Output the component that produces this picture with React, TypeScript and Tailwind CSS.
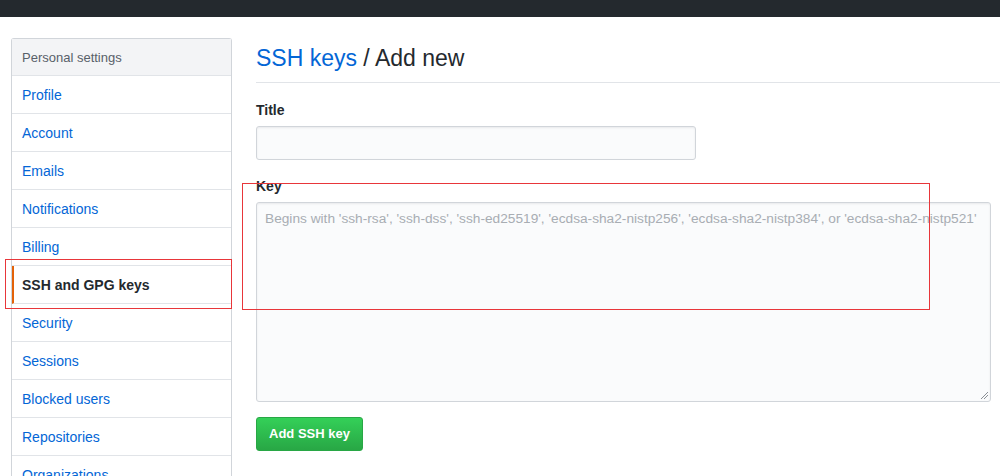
const items = [
  'Profile',
  'Account',
  'Emails',
  'Notifications',
  'Billing',
  'SSH and GPG keys',
  'Security',
  'Sessions',
  'Blocked users',
  'Repositories',
  'Organizations',
];

export default function App() {
  return (
    <div className="relative h-[476px] w-[1000px] overflow-hidden bg-white font-['Liberation_Sans',Arial,sans-serif] text-[14px] text-[#24292e]">
      <div className="h-[17px] bg-[#24292e]" />
      <div className="flex gap-[24px] pl-[11px] pt-[21px]">
        <nav className="w-[221px] shrink-0 rounded-t-[3px] border border-[#d1d5da] border-b-0">
          <div className="flex h-[37px] items-center border-b border-[#e1e4e8] bg-[#f3f4f6] px-[10px] pt-[2px] text-[13px] text-[#586069]">
            Personal settings
          </div>
          {items.map((l) => {
            const on = l === 'SSH and GPG keys';
            return (
              <div
                key={l}
                className={
                  on
                    ? 'flex h-[38px] items-center border-b border-l-2 border-[#e1e4e8] border-l-[#e36209] pl-[8px] pt-[2px] font-semibold text-[#24292e]'
                    : 'flex h-[38px] items-center border-b border-[#e1e4e8] pl-[10px] pt-[2px] text-[#0366d6]'
                }
              >
                {l}
              </div>
            );
          })}
        </nav>
        <main className="flex-1">
          <div className="flex h-[45px] items-center border-b border-[#e1e4e8] pb-[4px] text-[23px] leading-none">
            <span className="text-[#0366d6]">SSH keys</span>
            <span className="whitespace-pre"> / Add new</span>
          </div>
          <div className="mt-[17px] font-semibold">Title</div>
          <div className="mt-[5px] h-[34px] w-[440px] rounded-[3px] border border-[#d1d5da] bg-[#fafbfc] shadow-[inset_0_1px_2px_rgba(27,31,35,0.075)]" />
          <div className="mt-[16px] font-semibold">Key</div>
          <div className="relative mt-[5px] h-[200px] w-[735px] overflow-hidden whitespace-nowrap rounded-[3px] border border-[#d1d5da] bg-[#fafbfc] px-[8px] pt-[6px] text-[13.7px] text-[#a8adb3] shadow-[inset_0_1px_2px_rgba(27,31,35,0.075)]">
            Begins with 'ssh-rsa', 'ssh-dss', 'ssh-ed25519', 'ecdsa-sha2-nistp256', 'ecdsa-sha2-nistp384', or 'ecdsa-sha2-nistp521'
            {/* resize grip */}
            <svg className="absolute bottom-[2px] right-[2px]" width="8" height="8" viewBox="0 0 8 8">
              <path d="M1 8L8 1M4 8L8 4" stroke="#8a8f95" strokeWidth="1" />
            </svg>
          </div>
          <button className="mt-[15px] flex h-[34px] items-center rounded-[3px] border border-[#28a745] bg-gradient-to-b from-[#34d058] to-[#28a745] px-[12px] text-[13px] font-semibold text-white">
            Add SSH key
          </button>
        </main>
      </div>
      <div className="absolute left-[5px] top-[259px] h-[50px] w-[227px] border border-[#e8363a]" />
      <div className="absolute left-[242px] top-[183px] h-[127px] w-[688px] border border-[#e8363a]" />
    </div>
  );
}
